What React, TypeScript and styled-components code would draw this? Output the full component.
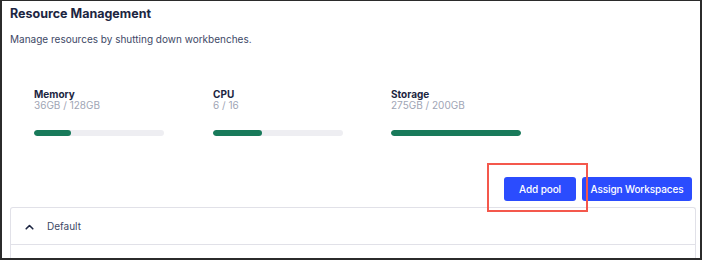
import styled, { createGlobalStyle } from 'styled-components';

const GlobalStyle = createGlobalStyle`
  html, body {
    margin: 0;
    padding: 0;
    background: #ffffff;
  }
  body {
    font-family: Inter, 'Noto Sans', 'Liberation Sans', sans-serif;
  }
`;

interface Metric {
  label: string;
  used: number;
  total: number;
  unit: string;
}

const metrics: Metric[] = [
  { label: 'Memory', used: 36, total: 128, unit: 'GB' },
  { label: 'CPU', used: 6, total: 16, unit: '' },
  { label: 'Storage', used: 275, total: 200, unit: 'GB' },
];

const ChevronUp = () => (
  <svg width="9" height="6" viewBox="0 0 9 6" fill="none">
    <path d="M1.2 4.8 L4.5 1.5 L7.8 4.8" stroke="#1c2541" strokeWidth="1.6" strokeLinecap="round" strokeLinejoin="round" />
  </svg>
);

export default function App() {
  return (
    <>
      <GlobalStyle />
      <Frame>
        <Title>Resource Management</Title>
        <Subtitle>Manage resources by shutting down workbenches.</Subtitle>
        <MetricsRow>
          {metrics.map((m) => {
            const pct = Math.min(100, (m.used / m.total) * 100);
            return (
              <MetricColumn key={m.label}>
                <MetricLabel>{m.label}</MetricLabel>
                <MetricValue>
                  {m.used}
                  {m.unit} / {m.total}
                  {m.unit}
                </MetricValue>
                <BarTrack>
                  <BarFill style={{ width: `${pct}%` }} />
                </BarTrack>
              </MetricColumn>
            );
          })}
        </MetricsRow>
        <ActionRow>
          <HighlightWrap>
            <Button width={72}>Add pool</Button>
            <Highlight />
          </HighlightWrap>
          <Button width={110}>Assign Workspaces</Button>
        </ActionRow>
        <PoolCard>
          <PoolHeader>
            <ChevronBox>
              <ChevronUp />
            </ChevronBox>
            <PoolName>Default</PoolName>
          </PoolHeader>
        </PoolCard>
      </Frame>
    </>
  );
}

const Frame = styled.div`
  width: 702px;
  height: 260px;
  box-sizing: border-box;
  border-style: solid;
  border-color: #2b2b2b;
  border-width: 1px 2px 2px 2px;
  padding: 5px 0 0 8px;
  overflow: hidden;
  display: flex;
  flex-direction: column;
`;

const Title = styled.div`
  font-size: 12.5px;
  line-height: 16px;
  font-weight: 700;
  color: #1c2541;
`;

const Subtitle = styled.div`
  margin-top: 10px;
  font-size: 10px;
  line-height: 14px;
  color: #3d4866;
`;

const MetricsRow = styled.div`
  display: grid;
  grid-template-columns: 179px 178px 178px;
  padding-left: 24px;
  margin-top: 43px;
`;

const MetricColumn = styled.div`
  display: flex;
  flex-direction: column;
`;

const MetricLabel = styled.div`
  font-size: 10px;
  line-height: 11px;
  font-weight: 700;
  color: #1c2541;
`;

const MetricValue = styled.div`
  font-size: 10px;
  line-height: 11px;
  color: #a0a5b5;
`;

const BarTrack = styled.div`
  margin-top: 19px;
  width: 130px;
  height: 6px;
  border-radius: 3px;
  background: #eeeef2;
  overflow: hidden;
`;

const BarFill = styled.div`
  height: 100%;
  border-radius: 3px;
  background: #187a5a;
`;

const ActionRow = styled.div`
  margin-top: 41px;
  padding-right: 8px;
  display: flex;
  justify-content: flex-end;
  gap: 6px;
`;

const HighlightWrap = styled.div`
  position: relative;
  display: flex;
`;

const Highlight = styled.div`
  position: absolute;
  left: -17px;
  top: -14px;
  width: 101px;
  height: 49px;
  box-sizing: border-box;
  border: 2.5px solid #f4584c;
  pointer-events: none;
`;

const Button = styled.button<{ width: number }>`
  width: ${(props) => props.width}px;
  height: 24px;
  padding: 0;
  border: none;
  border-radius: 3px;
  background: #2b4cfe;
  color: #ffffff;
  font-family: inherit;
  font-size: 10px;
  font-weight: 500;
  letter-spacing: -0.1px;
  white-space: nowrap;
  cursor: pointer;
`;

const PoolCard = styled.div`
  margin-top: 6px;
  margin-right: 4px;
  flex: 1;
  border: 1px solid #e1e1e8;
  border-bottom: none;
  border-radius: 3px 3px 0 0;
`;

const PoolHeader = styled.div`
  height: 37px;
  box-sizing: border-box;
  border-bottom: 1px solid #e1e1e8;
  display: flex;
  align-items: center;
  padding-left: 14px;
  gap: 13px;
`;

const ChevronBox = styled.span`
  display: flex;
  align-items: center;
  margin-top: 2px;
`;

const PoolName = styled.span`
  font-size: 10px;
  color: #3d4866;
`;
